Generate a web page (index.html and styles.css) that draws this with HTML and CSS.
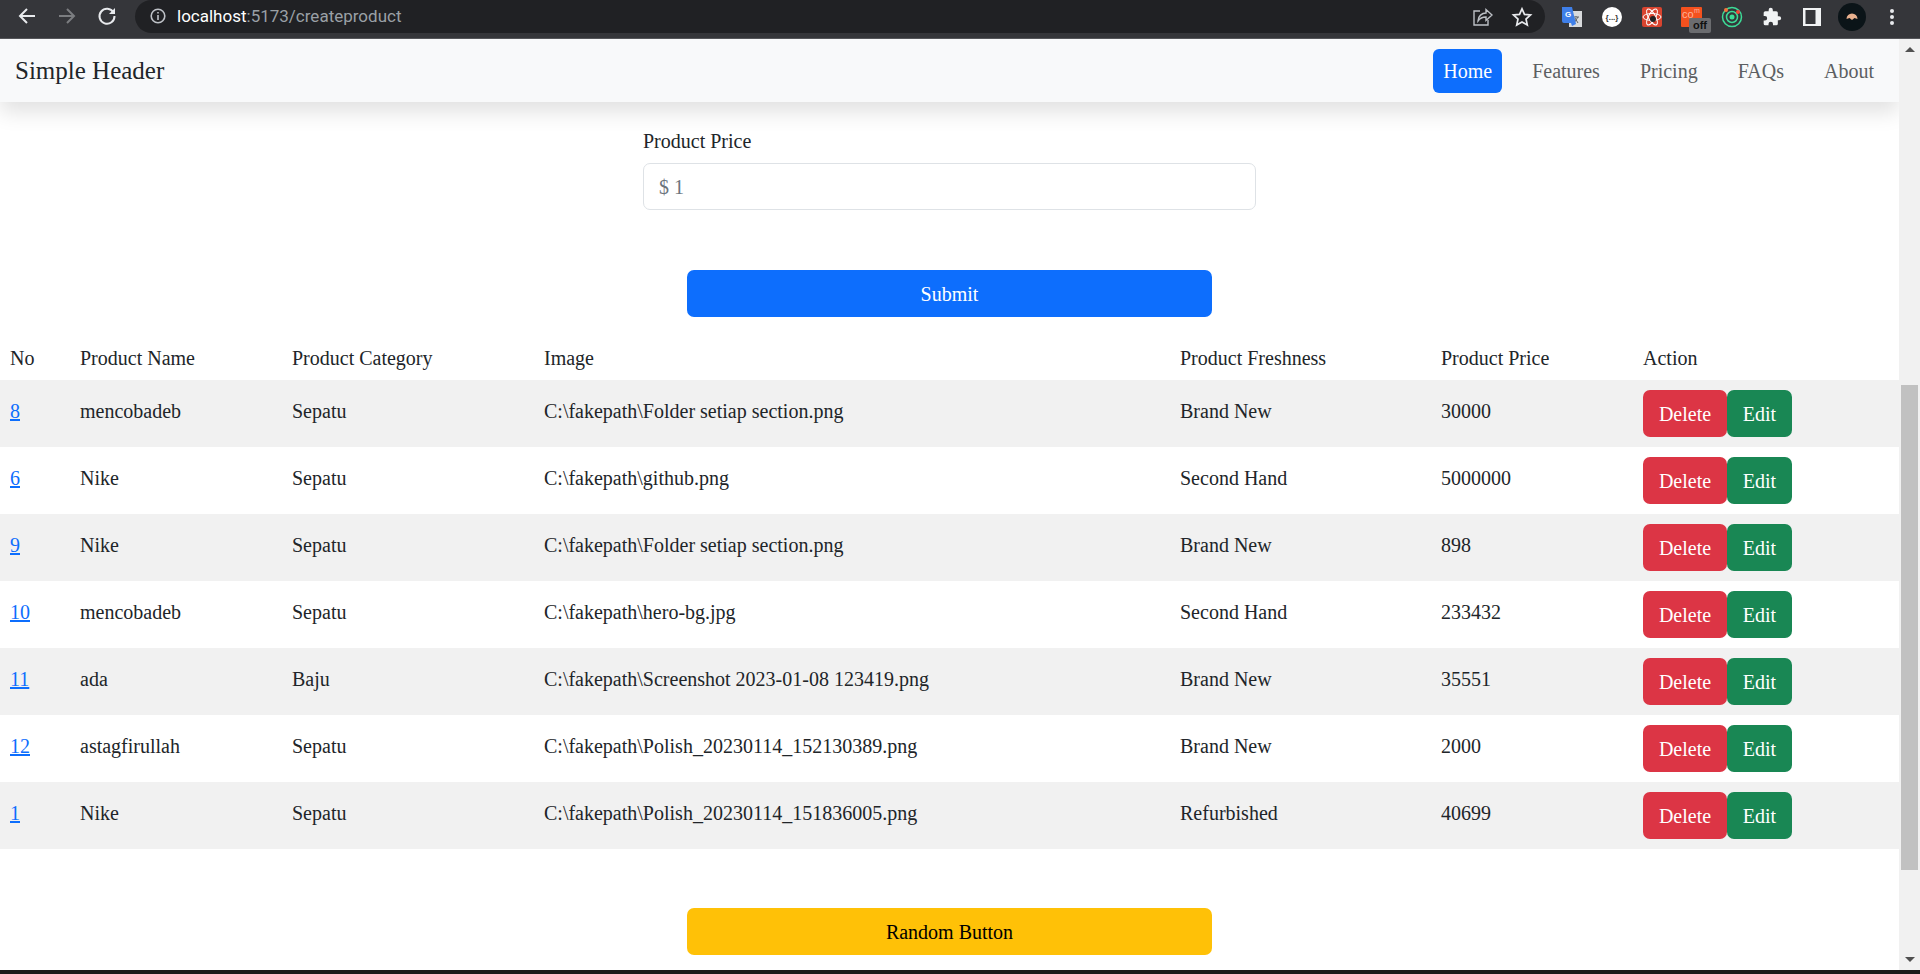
FILE: index.html
```html
<!DOCTYPE html>
<html lang="en">
<head>
    <meta charset="UTF-8">
    <title>Simple Header</title>
    <link rel="stylesheet" href="styles.css">
</head>
<body>
    <div class="toolbar">
        <div class="nav-icons">
            <svg width="24" height="24" viewBox="0 0 24 24" fill="none" stroke="#e8eaed" stroke-width="2"><path d="M20 12H5M12 5l-7 7 7 7"/></svg>
            <svg width="24" height="24" viewBox="0 0 24 24" fill="none" stroke="#7b7d80" stroke-width="2"><path d="M4 12h15M12 5l7 7-7 7"/></svg>
            <svg width="24" height="24" viewBox="0 0 24 24" fill="none" stroke="#e8eaed" stroke-width="2"><path d="M18.500 8.500A7.500 7.500 0 1 0 19.500 12"/><path d="M20 4v6h-6z" fill="#e8eaed" stroke="none"/></svg>
        </div>
        <div class="omnibox">
            <div class="url">
                <svg width="18" height="18" viewBox="0 0 18 18" fill="none" stroke="#bdc1c6" stroke-width="1.6"><circle cx="9" cy="9" r="6.800"/><path d="M9 8v5M9 5v1.600"/></svg>
                <span class="host">localhost</span><span class="path">:5173/createproduct</span>
            </div>
            <div class="omni-actions">
                <svg width="22" height="22" viewBox="0 0 22 22" fill="none" stroke="#bdc1c6" stroke-width="1.4"><path d="M9 5H3v14h14v-5"/><path d="M7 15c0-5 4-8 8-8V3.500l6 5.500-6 5.500V11c-3 0-6 1-8 4z"/></svg>
                <svg width="22" height="22" viewBox="0 0 22 22" fill="none" stroke="#e8eaed" stroke-width="1.7"><path d="M11 2.800l2.500 5.600 6 .6-4.500 4 1.300 6L11 16l-5.300 3 1.300-6-4.500-4 6-.6z"/></svg>
            </div>
        </div>
        <div class="extensions">
            <span class="ext"><svg width="22" height="22" viewBox="0 0 22 22"><rect x="8" y="5" width="13" height="16" fill="#d8dadc"/><path d="M12 11h6M15 10v1M13 17l4-6M14 12l3 5" stroke="#5f6368" fill="none"/><path d="M1 1h10l4 17-4 2-1-3H3a2 2 0 0 1-2-2z" fill="#3f7fe8"/><text x="4" y="11" class="ext-g">G</text></svg></span>
            <span class="ext"><svg width="22" height="22" viewBox="0 0 22 22"><circle cx="11" cy="11" r="10" fill="#fff"/><text x="11" y="14" class="ext-json">{...}</text></svg></span>
            <span class="ext"><svg width="22" height="22" viewBox="0 0 22 22"><rect x="1" y="1" width="20" height="20" rx="2" fill="#d9442f"/><g fill="none" stroke="#fff" stroke-width="1"><ellipse cx="11" cy="11" rx="9" ry="3.500"/><ellipse cx="11" cy="11" rx="9" ry="3.500" transform="rotate(60 11 11)"/><ellipse cx="11" cy="11" rx="9" ry="3.500" transform="rotate(120 11 11)"/></g><circle cx="12" cy="13" r="3" fill="#222"/></svg></span>
            <span class="ext ext-off">
                <svg width="22" height="22" viewBox="0 0 22 22"><rect x="0" y="1" width="21" height="20" rx="1" fill="#f4511e"/><text x="1" y="12" class="ext-com">co</text><text x="13" y="7" class="ext-m">m</text></svg>
                <span class="off-badge">off</span>
            </span>
            <span class="ext"><svg width="22" height="22" viewBox="0 0 22 22" fill="none"><circle cx="11" cy="11" r="9.500" stroke="#3ddc97" stroke-width="1.500"/><circle cx="11" cy="11" r="5.500" stroke="#3ddc97" stroke-width="1.500"/><circle cx="11" cy="11" r="2.500" fill="#3ddc97"/><circle cx="5" cy="4" r="2" fill="#f4743b"/><circle cx="17" cy="6" r="2" fill="#f44336"/></svg></span>
            <span class="ext"><svg width="20" height="20" viewBox="0 0 24 24" fill="#f1f3f4"><path d="M20.500 11H19V7a2 2 0 0 0-2-2h-4V3.500a2.500 2.500 0 0 0-5 0V5H4a2 2 0 0 0-2 2v3.800h1.500a2.700 2.700 0 0 1 0 5.400H2V20a2 2 0 0 0 2 2h3.800v-1.500a2.700 2.700 0 0 1 5.400 0V22H17a2 2 0 0 0 2-2v-4h1.500a2.500 2.500 0 0 0 0-5z"/></svg></span>
            <span class="ext"><svg width="20" height="20" viewBox="0 0 20 20"><rect x="1" y="1" width="18" height="18" fill="#f1f3f4"/><rect x="3.500" y="3" width="10" height="14" fill="#35363a"/></svg></span>
            <span class="ext"><svg width="28" height="28" viewBox="0 0 28 28"><circle cx="14" cy="14" r="14" fill="#0b1418"/><path d="M8.500 16a5.500 5.500 0 0 1 11 0l-3-1-2.500 2-2.500-2z" fill="#e8b08e"/></svg></span>
            <span class="ext"><svg width="6" height="20" viewBox="0 0 6 20" fill="#e8eaed"><circle cx="3" cy="4" r="2"/><circle cx="3" cy="10" r="2"/><circle cx="3" cy="16" r="2"/></svg></span>
        </div>
    </div>

    <div class="viewport">
        <div class="page">
            <header class="navbar">
                <span class="brand">Simple Header</span>
                <ul class="nav-links">
                    <li class="active">Home</li>
                    <li>Features</li>
                    <li>Pricing</li>
                    <li>FAQs</li>
                    <li>About</li>
                </ul>
            </header>

            <form class="price-form">
                <label class="form-label">Product Price</label>
                <div class="form-input">$ 1</div>
            </form>
            <div class="btn-wrap first"><button class="btn-wide submit" type="button">Submit</button></div>

            <table class="products">
                <colgroup>
                    <col class="c-no"><col class="c-name"><col class="c-cat"><col class="c-img"><col class="c-fresh"><col class="c-price"><col>
                </colgroup>
                <thead>
                    <tr><th>No</th><th>Product Name</th><th>Product Category</th><th>Image</th><th>Product Freshness</th><th>Product Price</th><th>Action</th></tr>
                </thead>
                <tbody>
                    <tr><td><a href="#">8</a></td><td>mencobadeb</td><td>Sepatu</td><td>C:\fakepath\Folder setiap section.png</td><td>Brand New</td><td>30000</td><td><div class="actions"><button class="del" type="button">Delete</button><button class="edit" type="button">Edit</button></div></td></tr>
                    <tr><td><a href="#">6</a></td><td>Nike</td><td>Sepatu</td><td>C:\fakepath\github.png</td><td>Second Hand</td><td>5000000</td><td><div class="actions"><button class="del" type="button">Delete</button><button class="edit" type="button">Edit</button></div></td></tr>
                    <tr><td><a href="#">9</a></td><td>Nike</td><td>Sepatu</td><td>C:\fakepath\Folder setiap section.png</td><td>Brand New</td><td>898</td><td><div class="actions"><button class="del" type="button">Delete</button><button class="edit" type="button">Edit</button></div></td></tr>
                    <tr><td><a href="#">10</a></td><td>mencobadeb</td><td>Sepatu</td><td>C:\fakepath\hero-bg.jpg</td><td>Second Hand</td><td>233432</td><td><div class="actions"><button class="del" type="button">Delete</button><button class="edit" type="button">Edit</button></div></td></tr>
                    <tr><td><a href="#">11</a></td><td>ada</td><td>Baju</td><td>C:\fakepath\Screenshot 2023-01-08 123419.png</td><td>Brand New</td><td>35551</td><td><div class="actions"><button class="del" type="button">Delete</button><button class="edit" type="button">Edit</button></div></td></tr>
                    <tr><td><a href="#">12</a></td><td>astagfirullah</td><td>Sepatu</td><td>C:\fakepath\Polish_20230114_152130389.png</td><td>Brand New</td><td>2000</td><td><div class="actions"><button class="del" type="button">Delete</button><button class="edit" type="button">Edit</button></div></td></tr>
                    <tr><td><a href="#">1</a></td><td>Nike</td><td>Sepatu</td><td>C:\fakepath\Polish_20230114_151836005.png</td><td>Refurbished</td><td>40699</td><td><div class="actions"><button class="del" type="button">Delete</button><button class="edit" type="button">Edit</button></div></td></tr>
                </tbody>
            </table>

            <div class="btn-wrap last"><button class="btn-wide random" type="button">Random Button</button></div>
        </div>
        <div class="scrollbar">
            <span class="arrow up"></span>
            <div class="track"><div class="thumb"></div></div>
            <span class="arrow down"></span>
        </div>
    </div>
    <div class="taskbar"></div>
</body>
</html>
```

FILE: styles.css
```css
* {
    margin: 0;
    padding: 0;
    box-sizing: border-box;
}
html, body {
    height: 100%;
    overflow: hidden;
}
body {
    display: flex;
    flex-direction: column;
    font-family: "Liberation Serif", serif;
    font-size: 20px;
    color: #212529;
    background: #fff;
}
button {
    font-family: inherit;
    font-size: 20px;
    border: 0;
    padding-top: 2px;
    cursor: pointer;
}

/* browser bar */
.toolbar {
    height: 39px;
    flex: none;
    display: flex;
    align-items: flex-start;
    background: #35363a;
    border-bottom: 1px solid #55565a;
}
.nav-icons {
    display: flex;
    gap: 16px;
    padding: 4px 0 0 15px;
    width: 135px;
}
.omnibox {
    width: 1410px;
    height: 33px;
    background: #202124;
    border-radius: 17px;
    display: flex;
    justify-content: space-between;
    align-items: center;
}
.url {
    display: flex;
    align-items: center;
    font-family: "Roboto", sans-serif;
    font-size: 17px;
    padding: 0 0 2px 14px;
}
.url svg {
    margin-right: 10px;
}
.host {
    color: #fff;
}
.path {
    color: #9aa0a6;
}
.omni-actions {
    display: flex;
    gap: 18px;
    padding-right: 12px;
}
.extensions {
    flex: 1;
    display: flex;
    align-items: center;
    height: 33px;
    padding-left: 7px;
}
.ext {
    flex: none;
    width: 40px;
    display: flex;
    justify-content: center;
    align-items: center;
}
.ext-off {
    position: relative;
}
.off-badge {
    position: absolute;
    left: 17px;
    top: 12px;
    width: 22px;
    height: 15px;
    background: #6b6c6f;
    border-radius: 2px;
    color: #111;
    font-family: "Liberation Sans", sans-serif;
    font-size: 11px;
    font-weight: bold;
    line-height: 15px;
    text-align: center;
}
.ext-g {
    font-family: "Liberation Sans", sans-serif;
    font-size: 8px;
    font-weight: bold;
    fill: #fff;
}
.ext-json {
    font-family: "Liberation Sans", sans-serif;
    font-size: 8px;
    font-weight: bold;
    fill: #333;
    text-anchor: middle;
}
.ext-com {
    font-family: "Liberation Sans", sans-serif;
    font-size: 11px;
    fill: #ffb199;
}
.ext-m {
    font-family: "Liberation Sans", sans-serif;
    font-size: 7px;
    fill: #ffb199;
}

/* page area with its scrollbar */
.viewport {
    flex: 1;
    display: flex;
    min-height: 0;
}
.page {
    flex: 1;
    min-width: 0;
    overflow: hidden;
}
.navbar {
    height: 63px;
    background: #f8f9fa;
    display: flex;
    align-items: center;
    justify-content: space-between;
    padding: 0 15px;
    box-shadow: 0 10px 20px rgba(0,0,0,.12);
    position: relative;
}
.brand {
    font-size: 25px;
    color: #212529;
}
.nav-links {
    list-style: none;
    display: flex;
    gap: 20px;
}
.nav-links li {
    padding: 10px;
    height: 44px;
    line-height: 24px;
    color: #5c5f62;
    border-radius: 6px;
}
.nav-links .active {
    background: #0d6efd;
    color: #fff;
}
.price-form {
    width: 613px;
    margin: 24px 0 0 643px;
}
.form-label {
    display: block;
    line-height: 30px;
    margin-bottom: 7px;
}
.form-input {
    height: 47px;
    border: 1px solid #dee2e6;
    border-radius: 7px;
    padding: 1px 15px 0;
    line-height: 45px;
    color: #6c757d;
}
.btn-wrap {
    display: flex;
    justify-content: center;
}
.btn-wrap.first {
    margin-top: 60px;
}
.btn-wrap.last {
    margin-top: 59px;
}
.btn-wide {
    width: 525px;
    height: 47px;
    border-radius: 7px;
}
.submit {
    background: #0d6efd;
    color: #fff;
}
.random {
    background: #ffc107;
    color: #000;
}
.products {
    width: 100%;
    border-collapse: collapse;
    table-layout: fixed;
    margin-top: 23px;
}
.c-no { width: 70px; }
.c-name { width: 212px; }
.c-cat { width: 252px; }
.c-img { width: 636px; }
.c-fresh { width: 261px; }
.c-price { width: 202px; }
th {
    height: 40px;
    font-weight: normal;
    text-align: left;
    padding: 0 10px 4px;
    vertical-align: middle;
}
td {
    height: 67px;
    padding: 0 10px;
    vertical-align: middle;
}
td:not(:last-child) {
    padding-bottom: 5px;
}
tbody tr:nth-child(odd) {
    background: #f1f1f1;
}
td a {
    color: #0d6efd;
}
.actions {
    display: flex;
}
.actions button {
    height: 47px;
    color: #fff;
    border-radius: 7px;
}
.del {
    width: 84px;
    background: #dc3545;
}
.edit {
    width: 65px;
    background: #198754;
}

/* fake scrollbar */
.scrollbar {
    width: 21px;
    flex: none;
    background: #f1f1f1;
    display: flex;
    flex-direction: column;
    align-items: center;
}
.arrow {
    flex: none;
    height: 21px;
    width: 21px;
    display: flex;
    align-items: center;
    justify-content: center;
}
.arrow::before {
    content: "";
    border-left: 5px solid transparent;
    border-right: 5px solid transparent;
}
.arrow.up::before {
    border-bottom: 5px solid #505050;
}
.arrow.down::before {
    border-top: 5px solid #505050;
}
.track {
    flex: 1;
    width: 100%;
    padding: 325px 2px 0;
}
.thumb {
    height: 485px;
    background: #c1c1c1;
}
.taskbar {
    height: 4px;
    flex: none;
    background: #1a1a1a;
}
```
